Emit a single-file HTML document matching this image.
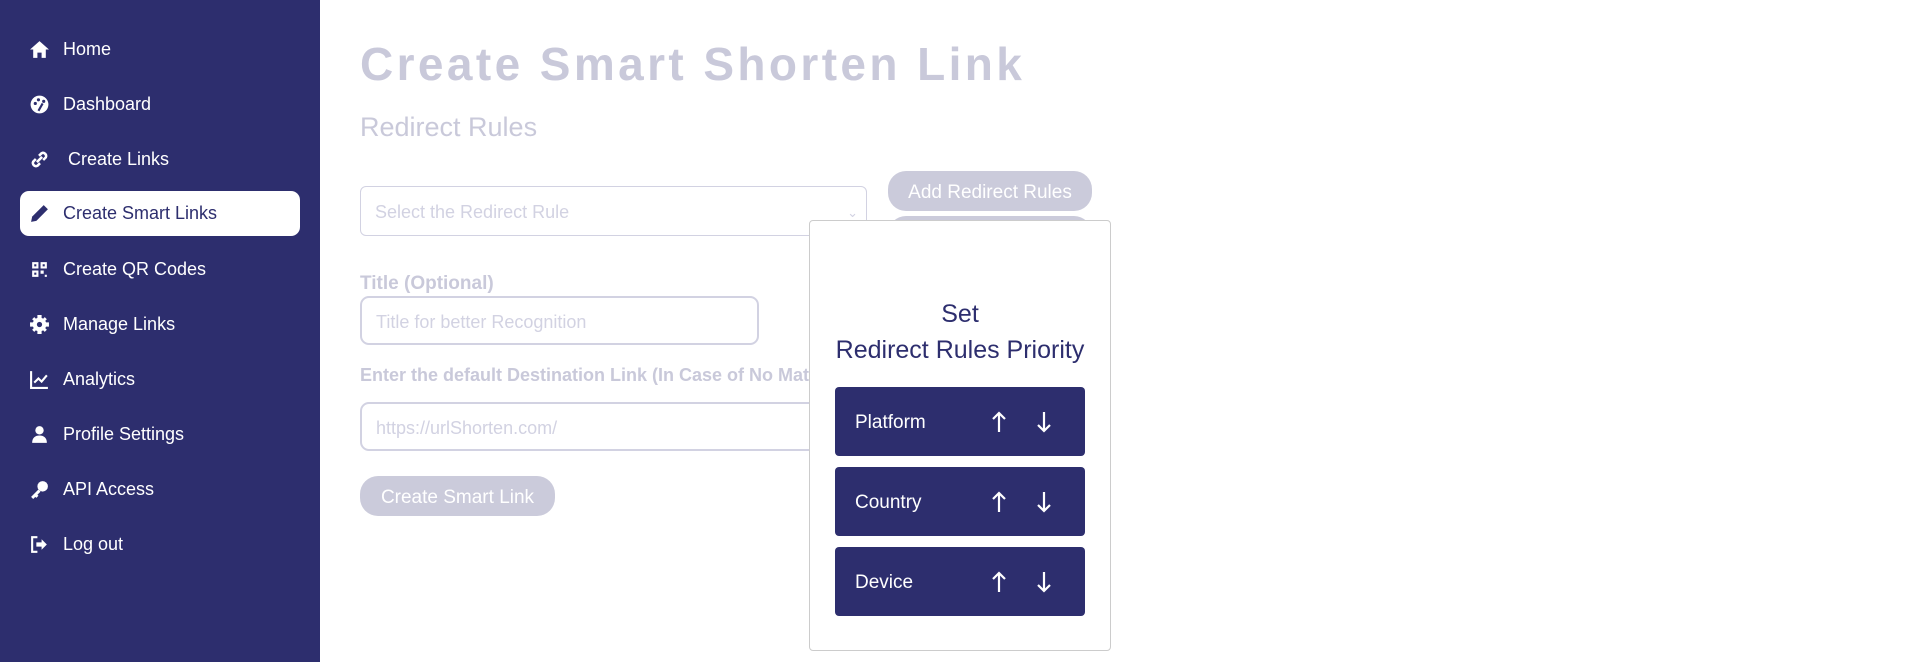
<!DOCTYPE html>
<html><head><meta charset="utf-8"><style>
*{box-sizing:border-box;margin:0;padding:0}
body{width:1920px;height:662px;overflow:hidden;background:#fff;font-family:"Liberation Sans",sans-serif;position:relative}
.sb{position:absolute;left:0;top:0;width:320px;height:662px;background:#2d2e6e}
.nav{position:absolute;left:20px;width:280px;height:45px;color:#fff;font-size:18px;display:flex;align-items:center;padding-left:9px}
.nav svg{width:21px;height:21px;margin-right:13px;fill:#fff}
.nav.act{background:#fff;color:#2d2e6e;border-radius:9px}
.nav.act svg{fill:#2d2e6e}
.g{color:#c9c9da}
.abs{position:absolute}
.inp{position:absolute;border:2px solid #d2d2e2;border-radius:9px;color:#d2d2e2;font-size:18px;display:flex;align-items:center;padding-left:14px;background:#fff}
.btn{position:absolute;background:#cbcbdb;color:#fff;border-radius:18px;font-size:19px;display:flex;align-items:center;justify-content:center}
.pop{position:absolute;left:809px;top:220px;width:302px;height:431px;border:1px solid #ccc;border-radius:4px;background:#fff}
.row{position:absolute;left:25px;width:250px;height:69px;background:#2d2e6e;border-radius:4px;color:#fff;font-size:19px}
.row span{position:absolute;left:20px;top:25px}
.row svg{position:absolute;top:24px;width:16px;height:22px}
</style></head><body>
<div class="sb">
<div class="nav" style="top:27px"><svg viewBox="0 0 20 20"><path d="M10 2 1 10h3v8h4v-5h4v5h4v-8h3z"/></svg>Home</div>
<div class="nav" style="top:82px"><svg viewBox="0 0 20 20"><circle cx="10" cy="10" r="8.5"/><circle cx="6" cy="9" r="1.5" fill="#2d2e6e"/><circle cx="9" cy="5.5" r="1.5" fill="#2d2e6e"/><circle cx="14" cy="7" r="1.5" fill="#2d2e6e"/><path d="M9 16l4-7" stroke="#2d2e6e" stroke-width="2"/></svg>Dashboard</div>
<div class="nav" style="top:137px"><svg viewBox="0 0 20 20"><path d="M7.5 12.5l5-5M6.5 9.5l-2.5 2.5a3 3 0 004 4l2.5-2.5M13.5 10.5l2.5-2.5a3 3 0 00-4-4l-2.5 2.5" stroke="#fff" stroke-width="2.4" fill="none"/></svg>&nbsp;Create Links</div>
<div class="nav act" style="top:191px"><svg viewBox="0 0 20 20"><path d="M14 2l4 4-11 11-5 1 1-5z"/></svg>Create Smart Links</div>
<div class="nav" style="top:247px"><svg viewBox="0 0 20 20"><path d="M3 3h6v6H3zM11 3h6v6h-6zM3 11h6v6H3zM11 11h3v3h-3zM15 15h2v2h-2z"/><path d="M5 5h2v2H5zM13 5h2v2h-2zM5 13h2v2H5z" fill="#2d2e6e"/></svg>Create QR Codes</div>
<div class="nav" style="top:302px"><svg viewBox="0 0 20 20"><circle cx="10" cy="10" r="6.5"/><path d="M8 1h4v4H8zM8 15h4v4H8zM1 8h4v4H1zM15 8h4v4h-4zM3 5l2-2 3 3-2 2zM15 17l2-2-3-3-2 2zM17 5l-2-2-3 3 2 2zM3 15l2 2 3-3-2-2z"/><circle cx="10" cy="10" r="2.5" fill="#2d2e6e"/></svg>Manage Links</div>
<div class="nav" style="top:357px"><svg viewBox="0 0 20 20"><path d="M2 2v16h16" stroke="#fff" stroke-width="2" fill="none"/><path d="M5 13l4-4 3 3 5-6" stroke="#fff" stroke-width="2" fill="none"/></svg>Analytics</div>
<div class="nav" style="top:412px"><svg viewBox="0 0 20 20"><circle cx="10" cy="6" r="4"/><path d="M3 18c0-5 3-7 7-7s7 2 7 7z"/></svg>Profile Settings</div>
<div class="nav" style="top:467px"><svg viewBox="0 0 20 20"><circle cx="13" cy="7" r="5"/><path d="M9 10l-7 7 2 2 2-2 1 1 2-2-1-1 3-3z"/></svg>API Access</div>
<div class="nav" style="top:522px"><svg viewBox="0 0 20 20"><path d="M8 3H3v14h5" stroke="#fff" stroke-width="2" fill="none"/><path d="M12 5l5 5-5 5v-3H7V8h5z"/></svg>Log out</div>
</div>
<div class="abs g" style="left:360px;top:37px;font-size:46px;font-weight:bold;letter-spacing:3.4px">Create Smart Shorten Link</div>
<div class="abs g" style="left:360px;top:112px;font-size:27px">Redirect Rules</div>
<div class="inp" style="left:360px;top:186px;width:507px;height:50px;border-width:1px;border-radius:6px;padding-top:3px">Select the Redirect Rule<span style="position:absolute;right:8px;font-size:13px">&#8964;</span></div>
<div class="btn" style="left:888px;top:216px;width:204px;height:40px"></div>
<div class="btn" style="left:888px;top:171px;width:204px;height:40px;padding-top:4px">Add Redirect Rules</div>
<div class="abs g" style="left:360px;top:273px;font-size:19px;font-weight:bold">Title (Optional)</div>
<div class="inp" style="left:360px;top:296px;width:399px;height:49px;padding-top:4px">Title for better Recognition</div>
<div class="abs g" style="left:360px;top:365px;font-size:18px;font-weight:bold">Enter the default Destination Link (In Case of No Match)</div>
<div class="inp" style="left:360px;top:402px;width:520px;height:49px;padding-top:4px">https://urlShorten.com/</div>
<div class="btn" style="left:360px;top:476px;width:195px;height:40px;padding-top:4px">Create Smart Link</div>
<div class="pop">
<div class="abs" style="left:0;width:300px;top:75px;text-align:center;color:#2d2e6e;font-size:25px;line-height:36px">Set<br>Redirect Rules Priority</div>
<div class="row" style="top:166px"><span>Platform</span><svg style="left:156px" viewBox="0 0 16 22"><path d="M8 21V2M2 8l6-6 6 6" stroke="#fff" stroke-width="2.2" fill="none"/></svg><svg style="left:201px" viewBox="0 0 16 22"><path d="M8 1v19M2 14l6 6 6-6" stroke="#fff" stroke-width="2.2" fill="none"/></svg></div>
<div class="row" style="top:246px"><span>Country</span><svg style="left:156px" viewBox="0 0 16 22"><path d="M8 21V2M2 8l6-6 6 6" stroke="#fff" stroke-width="2.2" fill="none"/></svg><svg style="left:201px" viewBox="0 0 16 22"><path d="M8 1v19M2 14l6 6 6-6" stroke="#fff" stroke-width="2.2" fill="none"/></svg></div>
<div class="row" style="top:326px"><span>Device</span><svg style="left:156px" viewBox="0 0 16 22"><path d="M8 21V2M2 8l6-6 6 6" stroke="#fff" stroke-width="2.2" fill="none"/></svg><svg style="left:201px" viewBox="0 0 16 22"><path d="M8 1v19M2 14l6 6 6-6" stroke="#fff" stroke-width="2.2" fill="none"/></svg></div>
</div>
</body></html>
